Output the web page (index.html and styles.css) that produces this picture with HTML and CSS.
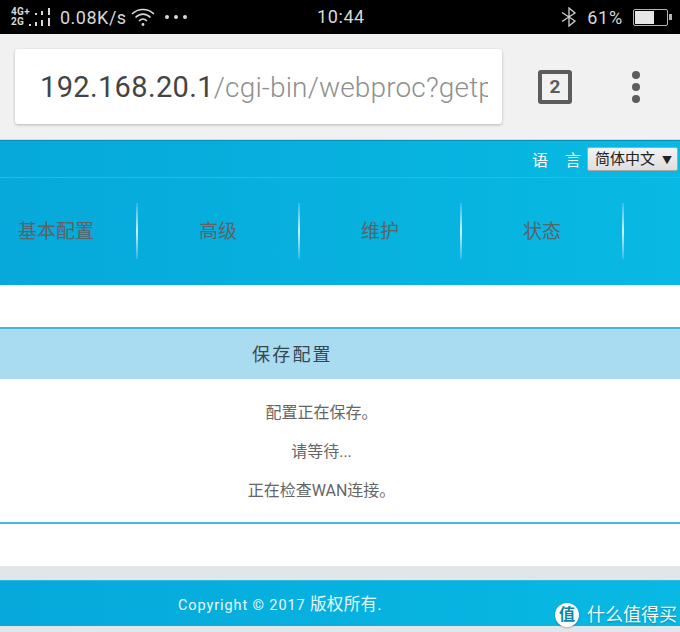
FILE: index.html
```html
<!DOCTYPE html>
<html lang="zh-CN">
<head>
    <meta charset="UTF-8">
    <meta name="viewport" content="width=device-width, initial-scale=1.0">
    <title>保存配置</title>
    <link rel="stylesheet" href="styles.css">
</head>
<body>
    <!-- Phone status bar -->
    <div class="status-bar">
        <div class="status-left">
            <div class="net-types"><span>4G+</span><span>2G</span></div>
            <svg class="signal" width="22" height="20" viewBox="0 0 22 20" fill="#d8d8d8">
                <rect x="6" y="6" width="2" height="2"/><rect x="12" y="4" width="2" height="4"/><rect x="19" y="1" width="2" height="7"/>
                <rect x="0" y="17" width="2" height="2"/><rect x="6" y="15" width="2" height="4"/><rect x="12" y="13" width="2" height="6"/><rect x="19" y="11" width="2" height="8"/>
            </svg>
            <span class="speed">0.08K/s</span>
            <svg class="wifi" width="25" height="20" viewBox="0 0 25 20" fill="none" stroke="#d8d8d8" stroke-width="1.6">
                <path d="M1 7 C7 1 17 1 23 7"/>
                <path d="M4.5 10.5 C9 6 15 6 19.5 10.5"/>
                <path d="M8 14 C10.5 11.5 13.5 11.5 16 14"/>
                <circle cx="12" cy="17.5" r="1.4" fill="#d8d8d8" stroke="none"/>
            </svg>
            <div class="more"><i></i><i></i><i></i></div>
        </div>
        <span class="clock">10:44</span>
        <div class="status-right">
            <svg width="16" height="20" viewBox="0 0 16 20" fill="none" stroke="#d0d0d0" stroke-width="1.3">
                <path d="M1 5.5 L14 14 L8 19 V1 L14 6 L1 14.5"/>
            </svg>
            <span class="battery-text">61%</span>
            <div class="battery"><div class="battery-level"></div></div>
        </div>
    </div>

    <!-- Browser toolbar -->
    <div class="toolbar">
        <div class="url-box"><span class="url-text"><span class="url-host">192.168.20.1</span>/cgi-bin/webproc?getp</span></div>
        <div class="tab-count">2</div>
        <div class="menu-dots"><i></i><i></i><i></i></div>
    </div>

    <!-- Router page -->
    <div class="header">
        <div class="lang-row">
            <span class="lang-label"><span>语</span><span>言</span></span>
            <span class="lang-select">简体中文<small>▼</small></span>
        </div>
        <div class="nav">
            <div class="nav-item">基本配置</div>
            <div class="nav-item">高级</div>
            <div class="nav-item">维护</div>
            <div class="nav-item">状态</div>
        </div>
    </div>

    <div class="content">
        <div class="panel">
            <h2 class="panel-title">保存配置</h2>
            <div class="panel-body">
                <p>配置正在保存。</p>
                <p>请等待...</p>
                <p>正在检查WAN连接。</p>
            </div>
        </div>
    </div>

    <div class="footer-gap"></div>
    <div class="footer">Copyright © 2017 <span class="footer-cn">版权所有.</span></div>
    <div class="footer-end"></div>

    <!-- Watermark -->
    <div class="watermark">
        <span class="watermark-logo">值</span>
        <span>什么值得买</span>
    </div>
</body>
</html>
```

FILE: styles.css
```css
* {
    box-sizing: border-box;
}

html, body {
    height: 632px;
    overflow: hidden;
}

body {
    margin: 0;
    position: relative;
    background-color: #fff;
    font-family: "Roboto", "Noto Sans CJK SC", sans-serif;
}

/* Status bar */
.status-bar {
    height: 34px;
    background-color: #000;
    color: #d8d8d8;
    display: flex;
    align-items: center;
    justify-content: space-between;
    padding: 0 10px 0 11px;
    position: relative;
}

.status-left, .status-right {
    display: flex;
    align-items: center;
}

.net-types {
    display: flex;
    flex-direction: column;
    font-size: 10px;
    font-weight: 700;
    letter-spacing: 0.3px;
    line-height: 10px;
    width: 18px;
    white-space: nowrap;
}

.speed {
    font-size: 18px;
    letter-spacing: 0.5px;
    margin-left: 9px;
}

.wifi {
    margin-left: 4px;
}

.more {
    display: flex;
    gap: 5px;
    margin-left: 9px;
}

.more i {
    display: block;
    width: 4px;
    height: 4px;
    border-radius: 50%;
    background-color: #d8d8d8;
}

.clock {
    position: absolute;
    left: 317px;
    top: 6px;
    font-size: 18px;
    letter-spacing: 0.6px;
}

.status-right svg {
    margin-right: 10px;
}

.battery-text {
    font-size: 18px;
    letter-spacing: 0.8px;
    margin-right: 10px;
}

.battery {
    width: 35px;
    height: 17px;
    border: 1.5px solid #b4b4b4;
    border-radius: 2px;
    padding: 1px;
    position: relative;
    margin-right: 2px;
}

.battery::after {
    content: "";
    position: absolute;
    right: -5px;
    top: 4px;
    width: 3px;
    height: 6px;
    background-color: #b4b4b4;
}

.battery-level {
    width: 61%;
    height: 100%;
    background-color: #e6e6e6;
}

/* Browser toolbar */
.toolbar {
    height: 106px;
    background-color: #f1f1f1;
    border-bottom: 1px solid #cfdde2;
    display: flex;
    align-items: center;
    padding-left: 15px;
}

.url-box {
    width: 487px;
    height: 75px;
    background-color: #fff;
    border-radius: 3px;
    box-shadow: 0 1px 3px rgba(0, 0, 0, 0.25);
    padding: 0 14px 0 25px;
    display: flex;
    align-items: center;
    overflow: hidden;
}

.url-text {
    font-size: 28px;
    font-weight: 300;
    letter-spacing: 0.15px;
    color: #8f8f8f;
    white-space: nowrap;
    overflow: hidden;
}

.url-host {
    color: #444;
    font-size: 29px;
    font-weight: 400;
    letter-spacing: 0.35px;
}

.tab-count {
    width: 34px;
    height: 34px;
    margin-left: 36px;
    border: 4px solid #5c5c5c;
    border-radius: 3px;
    color: #5c5c5c;
    font-size: 19px;
    font-weight: 700;
    line-height: 26px;
    text-align: center;
}

.menu-dots {
    margin-left: 60px;
    display: flex;
    flex-direction: column;
    gap: 4px;
}

.menu-dots i {
    display: block;
    width: 8px;
    height: 8px;
    border-radius: 50%;
    background-color: #5c5c5c;
}

/* Router header */
.header {
    height: 145px;
    background: linear-gradient(to right, #06a9da, #08b9e3);
    border-top: 1px solid #0a8fb8;
}

.lang-row {
    height: 37px;
    border-bottom: 1px solid #2cbae2;
    display: flex;
    align-items: center;
    justify-content: flex-end;
    padding-right: 2px;
    color: #fff;
}

.lang-label {
    display: flex;
    gap: 17px;
    font-size: 16px;
    margin-right: 6px;
}

.lang-select {
    width: 91px;
    height: 24px;
    background: linear-gradient(to bottom, #f4f4f4, #dedede);
    border: 1px solid #a8a8a8;
    border-radius: 2px;
    color: #222;
    font-size: 15px;
    line-height: 22px;
    padding-left: 7px;
    white-space: nowrap;
}

.lang-select small {
    font-size: 10px;
    margin-left: 7px;
}

.nav {
    display: flex;
    padding-top: 25px;
}

.nav-item {
    flex: 0 0 162px;
    height: 56px;
    position: relative;
    color: #5a6468;
    font-size: 19px;
    line-height: 57px;
    text-align: center;
}

.nav-item:first-child {
    flex-basis: 137px;
    padding-left: 18px;
    text-align: left;
}

.nav-item::after {
    content: "";
    position: absolute;
    right: -1px;
    top: 0;
    width: 2px;
    height: 56px;
    background: linear-gradient(to bottom, rgba(255,255,255,0.15), rgba(255,255,255,0.8) 50%, rgba(255,255,255,0.15));
}

/* Main content */
.content {
    height: 281px;
    padding-top: 42px;
}

.panel {
    height: 197px;
    border-top: 2px solid #45b6e0;
    border-bottom: 2px solid #4ab8e2;
}

.panel-title {
    margin: 0;
    height: 50px;
    background-color: #a9dcf1;
    color: #37474f;
    font-size: 18px;
    font-weight: 400;
    letter-spacing: 2.2px;
    line-height: 52px;
    padding-left: 252px;
}

.panel-body {
    color: #666;
    font-size: 16px;
    text-align: center;
    padding: 23px 37px 0 0;
}

.panel-body p {
    margin: 0 0 18px;
    line-height: 21px;
    height: 21px;
}

/* Footer */
.footer-gap {
    height: 14px;
    background-color: #e1e6e9;
}

.footer {
    height: 46px;
    background: linear-gradient(to right, #06a9da, #08b9e3);
    border-top: 1px solid #2cbae2;
    color: #e8f8fc;
    font-size: 14.5px;
    letter-spacing: 0.9px;
    line-height: 48px;
    padding-left: 178px;
}

.footer-cn {
    font-size: 16.5px;
    letter-spacing: 0.3px;
}

.footer-end {
    height: 6px;
    background-color: #e1e6e9;
}

/* Watermark sits over the footer */
.watermark {
    position: absolute;
    left: 555px;
    top: 603px;
    display: flex;
    align-items: center;
    gap: 8px;
    color: #f4fbfd;
    font-size: 18px;
    line-height: 24px;
    white-space: nowrap;
    text-shadow: 0 1px 2px rgba(0, 0, 0, 0.25);
}

.watermark-logo {
    width: 24px;
    height: 24px;
    border-radius: 50%;
    background-color: #fff;
    color: #0a86a8;
    font-size: 16px;
    font-weight: 700;
    text-align: center;
    text-shadow: none;
    box-shadow: 0 1px 2px rgba(0, 0, 0, 0.25);
}
```
